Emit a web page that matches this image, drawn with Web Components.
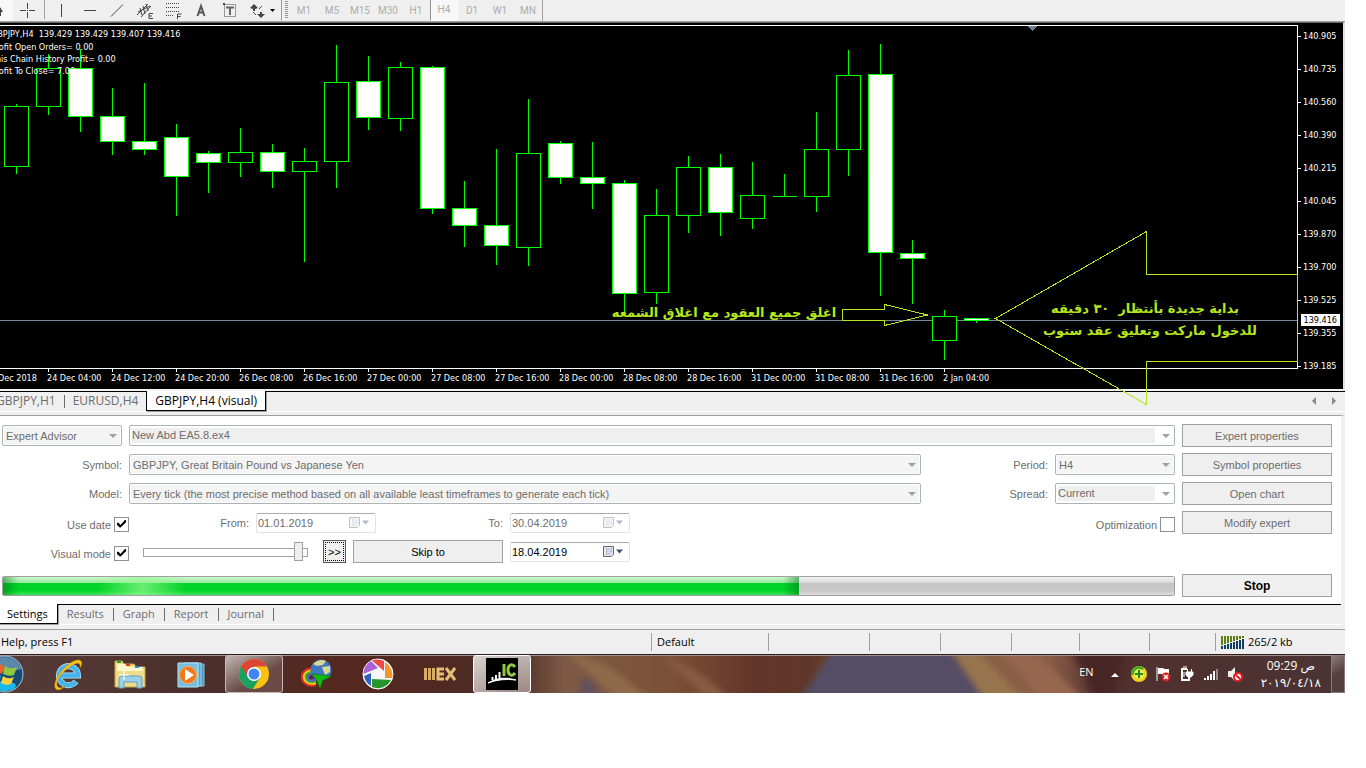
<!DOCTYPE html>
<html lang="en">
<head>
<meta charset="utf-8">
<title>GBPJPY,H4 (visual)</title>
<style>
  body {
    margin: 0;
    padding-right: 21px;
    background: #fff;
    font-family: "Open Sans", "Noto Sans", "DejaVu Sans", sans-serif;
    font-size: 11px;
    line-height: 16px;
    color: #000;
  }
</style>
</head>
<body>
<trade-terminal></trade-terminal>

<script>
// Small base class: subclasses only return their markup
class BaseElement extends HTMLElement {
  constructor() {
    super();
    this.attachShadow({ mode: 'open' });
  }

  connectedCallback() {
    this.shadowRoot.innerHTML = this.template();
  }
}

/* ---------- Toolbar ---------- */

class TradeToolbar extends BaseElement {
  template() {
    const tools = [
      ['Crosshair', '<path d="M14.500 2v6M14.500 11v6M7 9.500h6M16 9.500h6M14 9.500h1"/>'],
      null,
      ['Vertical line', '<path d="M14.500 3v13"/>'],
      ['Horizontal line', '<path d="M9 9.500h12"/>'],
      ['Trendline', '<path d="M8 15.500 20 3.500"/>'],
      ['Channel', '<path d="M6 14 17 3M10 16 20 5M9 7l2 7M12 5l2 8M15 3l2 7M7 11l12-6"/><path d="M22 12.500h-4v5h4M18 15h3"/>'],
      ['Fibonacci', '<path d="M7 2.500h14M7 6.500h14M7 10.500h14M7 14.500h8" stroke-dasharray="1 1"/><path d="M18.500 18v-5h4M18.500 15.500h3"/>'],
      ['Text', '<path d="M10.500 15 14 5l3.500 10M12 11.500h4" stroke="#555" stroke-width="2"/>'],
      ['Text label', '<path d="M9.500 3.500h11v12h-11z" stroke-dasharray="1 1"/><path d="M11 6.500h8M15 6v8" stroke="#666" stroke-width="2"/><path d="M8 2h2v2H8z" fill="#444" stroke="none"/>'],
      ['Arrows', '<path d="M7 7l4-4 4 4-3 1v2h-2V8zM14 13h3v-2h2v2h3l-4 4z" fill="#444" stroke="none"/><path d="M10 11l3 3M16 8l3-3"/><path d="M27 8h5l-2.500 3z" fill="#000" stroke="none"/>', 'wide']
    ];
    const periods = ['M1', 'M5', 'M15', 'M30', 'H1', 'H4', 'D1', 'W1', 'MN'];

    return `
      <style>
        :host {
          display: flex;
          align-items: stretch;
          height: 21px;
          background: #efefef;
          border-bottom: 1px solid #a0a0a0;
        }
        button {
          width: 28px;
          padding: 0;
          border: 0;
          background: none;
          font: 10px/18px Roboto, sans-serif;
          color: #adadad;
        }
        svg { display: block; fill: none; stroke: #444; }
        .cursor { width: 13px; background: #f8f8f8; }
        .wide { width: 38px; }
        .sep { width: 1px; background: #a0a0a0; margin: 0 2px 2px 3px; }
        .end { margin: 0; }
        .grip {
          width: 3px;
          margin: 1px 2px 2px 3px;
          background: repeating-linear-gradient(#999 0 1px, #efefef 1px 2px);
        }
        .active {
          box-sizing: border-box;
          border: 1px solid #fff;
          border-width: 0 1px 1px 0;
          border-left: 1px solid #909090;
          background: #f7f7f7;
        }
      </style>
      <button class="cursor" aria-label="Cursor">
        <svg width="13" height="20"><path d="M0 6l3 5H1v4H0z" fill="#444" stroke="none"/></svg>
      </button>
      ${tools.map(tool => tool ? `
        <button class="${tool[2] || ''}" aria-label="${tool[0]}">
          <svg width="${tool[2] ? 38 : 28}" height="20">${tool[1]}</svg>
        </button>` : '<span class="sep"></span>').join('')}
      <span class="sep end"></span>
      <span class="grip"></span>
      ${periods.map(p => `<button class="${p === 'H4' ? 'active' : ''}">${p}</button>`).join('')}
      <span class="sep end"></span>
    `;
  }
}
customElements.define('trade-toolbar', TradeToolbar);

/* ---------- Chart ---------- */

// high, body top, body bottom, low, bearish
const CANDLES = [
  [104, 106, 167, 174, 0], [54, 68, 107, 115, 0], [49, 68, 117, 132, 1],
  [88, 116, 142, 155, 1], [83, 141, 150, 155, 1], [124, 137, 177, 216, 1],
  [151, 153, 163, 193, 1], [128, 152, 163, 177, 0], [144, 152, 172, 188, 1],
  [148, 161, 172, 262, 0], [45, 82, 162, 188, 0], [56, 81, 118, 130, 1],
  [62, 67, 119, 131, 0], [66, 67, 209, 214, 1], [181, 208, 226, 247, 1],
  [149, 225, 246, 265, 1], [99, 153, 248, 266, 0], [141, 143, 178, 184, 1],
  [142, 177, 184, 209, 1], [180, 183, 294, 312, 1], [189, 215, 293, 304, 0],
  [156, 167, 216, 233, 0], [154, 167, 213, 236, 1], [162, 195, 219, 229, 0],
  [174, 196, 197, 197, 0], [112, 149, 197, 212, 0], [50, 75, 150, 176, 0],
  [44, 74, 253, 296, 1], [240, 253, 259, 304, 1], [310, 316, 341, 360, 0],
  [318, 318, 321, 323, 1]
];

class PriceChart extends BaseElement {
  candle([high, top, bottom, low, bearish], i) {
    const x = 4 + i * 32;
    return `
      <path d="M${x + 12.5} ${high}V${low}"/>
      <path d="M${x + 0.5} ${top + 0.5}h24V${bottom - 0.5}h-24z" fill="${bearish ? '#fff' : '#000'}"/>`;
  }

  template() {
    const prices = ['140.905', '140.735', '140.560', '140.390', '140.215', '140.045',
      '139.870', '139.700', '139.525', '139.355', '139.185'];
    const times = ['24 Dec 04:00', '24 Dec 12:00', '24 Dec 20:00', '26 Dec 08:00',
      '26 Dec 16:00', '27 Dec 00:00', '27 Dec 08:00', '27 Dec 16:00', '28 Dec 00:00',
      '28 Dec 08:00', '28 Dec 16:00', '31 Dec 00:00', '31 Dec 08:00', '31 Dec 16:00', '2 Jan 04:00'];

    return `
      <style>
        :host {
          display: grid;
          grid-template-columns: 1fr 45px;
          position: relative;
          padding-top: 2px;
          background: #000;
          border-top: 1px solid #696969;
          border-right: 2px solid #e3e3e3;
          border-bottom: 2px solid #f4f4f4;
          color: #fff;
          font: 9px/12px "DejaVu Sans Condensed", "DejaVu Sans", sans-serif;
        }
        .plot {
          height: 342px;
          border: 1px solid #fff;
          border-width: 1px 1px 1px 0;
        }
        .comment { position: relative; z-index: 2; overflow: hidden; }
        .comment p { margin: 0 0 0 -9px; white-space: pre; }
        .comment p:first-child { margin-top: 2px; margin-bottom: 1px; }
        .prices {
          display: flex;
          flex-direction: column;
          gap: 21px;
          height: 339px;
          padding-top: 5px;
        }
        .prices span { display: flex; align-items: center; gap: 2px; }
        .prices span::before { content: ""; width: 3px; height: 1px; background: #fff; }
        .times { display: flex; overflow: hidden; height: 20px; padding-top: 3px; box-sizing: border-box; }
        .times span { flex: none; width: 64px; white-space: nowrap; }
        .times .first { width: 49px; margin-left: -2px; }
        .current {
          position: absolute;
          right: 3px;
          top: 291px;
          padding: 0 3px;
          background: #fff;
          color: #000;
        }
        svg {
          position: absolute;
          left: 0;
          top: 0;
          width: 100%;
          height: 100%;
          overflow: visible;
          fill: none;
          stroke: #0f0;
          shape-rendering: crispEdges;
          pointer-events: none;
          z-index: 1;
        }
        .notes { stroke: #b5e61d; }
        .notes text {
          fill: #b5e61d;
          stroke: none;
          font: bold 13px "DejaVu Sans", sans-serif;
          text-anchor: middle;
          direction: rtl;
          white-space: pre;
        }
      </style>
      <div class="plot">
        <div class="comment">
          <p>GBPJPY,H4  139.429 139.429 139.407 139.416</p>
          <p>Profit Open Orders= 0.00</p>
          <p>This Chain History Profit= 0.00</p>
          <p>Profit To Close= 7.00</p>
        </div>
      </div>
      <div class="prices">${prices.map(p => `<span>${p}</span>`).join('')}</div>
      <div class="times"><span class="first">Dec 2018</span>${times.map(t => `<span>${t}</span>`).join('')}</div>
      <svg>
        <g transform="translate(0 -23)">
          <path d="M0 320.500H1297" stroke="#778899"/>
          <path d="M1027 26h11l-5.500 5z" fill="#708090" stroke="none"/>
          <path stroke="#fff" d="${times.map((t, i) => `M${48.5 + i * 64} 369v3`).join('')}"/>
          ${CANDLES.map((c, i) => this.candle(c, i)).join('')}
          <g class="notes">
            <path d="M842.500 309.500h42v-5l43 10.500-43 10.500v-5h-42z"/>
            <path d="M995.500 318.500 1146.500 231.500v43h151v87h-151v43z"/>
            <text x="724" y="317">اغلق جميع العقود مع اغلاق الشمعه</text>
            <text x="1145" y="313">بداية جديدة بأنتظار  ٣٠ دقيقه</text>
            <text x="1150" y="335">للدخول ماركت وتعليق عقد ستوب</text>
          </g>
        </g>
      </svg>
      <span class="current">139.416</span>
    `;
  }
}
customElements.define('price-chart', PriceChart);

/* ---------- Tabs ---------- */

class TabStrip extends BaseElement {
  template() {
    return `
      <style>
        :host {
          display: flex;
          height: 19px;
          border-top: 1px solid #000;
          border-bottom: 1px solid #fff;
          background: #efefef;
        }
        .end { display: flex; align-items: center; gap: 12px; margin-left: auto; padding: 0 8px 2px 0; }
      </style>
      <slot></slot>
      <div class="end"><slot name="end"></slot></div>
    `;
  }
}
customElements.define('tab-strip', TabStrip);

class TabItem extends BaseElement {
  template() {
    return `
      <style>
        :host { display: flex; align-items: flex-start; }
        button {
          height: 18px;
          padding: 0 var(--tab-space, 10px);
          border: 0;
          background: none;
          font: inherit;
          line-height: 18px;
          color: #6d6d6d;
          white-space: nowrap;
        }
        :host([divider])::after {
          content: "";
          width: 1px;
          height: 13px;
          margin-top: 3px;
          background: #6d6d6d;
        }
        :host([selected]) { margin-top: -1px; }
        :host([selected]) button {
          height: 20px;
          background: #fff;
          color: #000;
          border: 1px solid #000;
          border-top: 0;
          box-shadow: 1px 1px #a0a0a0;
        }
        :host([edge]) { margin-left: -4px; }
        :host([edge]:not([selected])) button { padding-left: 0; }
      </style>
      <button role="tab" aria-selected="${this.hasAttribute('selected')}"><slot></slot></button>
    `;
  }
}
customElements.define('tab-item', TabItem);

/* ---------- Form controls ---------- */

const CONTROL_CSS = `
  label { text-align: right; white-space: nowrap; }
  select, input, button, label { font: 11px/14px "Liberation Sans", Arial, sans-serif; color: #6d6d6d; }
  select, input { box-sizing: border-box; margin: 0; opacity: 1; }
`;

class SelectField extends BaseElement {
  template() {
    const label = this.getAttribute('label');
    const editable = this.hasAttribute('editable');
    const name = this.getAttribute('name');
    return `
      <style>
        ${CONTROL_CSS}
        :host { display: flex; align-items: center; gap: 7px; min-width: 0; }
        label { flex: none; width: 120px; }
        .box { display: grid; flex: 1; min-width: 0; align-items: center; }
        .box > * { grid-area: 1 / 1; }
        select {
          appearance: none;
          width: 100%;
          height: 21px;
          padding: 0 20px 0 3px;
          border: 1px solid #adb2b5;
          border-radius: 2px;
          background: #f4f4f4;
          box-shadow: inset 0 0 0 1px #fff;
        }
        .editable {
          padding-bottom: 2px;
          padding-left: 2px;
          background: linear-gradient(#efefef, #efefef) 2px 2px / calc(100% - 21px) 15px no-repeat #fff;
        }
        svg { justify-self: end; margin-right: 5px; pointer-events: none; }
      </style>
      ${label ? `<label for="field">${label}</label>` : ''}
      <div class="box">
        <select id="field" class="${editable ? 'editable' : ''}" ${name ? `aria-label="${name}"` : ''} disabled>
          <option>${this.getAttribute('value')}</option>
        </select>
        <svg width="8" height="4"><path d="M0 0h8L4 4z" fill="#a0a0a0"/></svg>
      </div>
    `;
  }
}
customElements.define('select-field', SelectField);

class DateField extends BaseElement {
  template() {
    const label = this.getAttribute('label');
    const disabled = this.hasAttribute('disabled') ? 'disabled' : '';
    return `
      <style>
        ${CONTROL_CSS}
        :host { display: flex; align-items: center; gap: 7px; }
        label { width: 120px; }
        .box {
          display: flex;
          align-items: center;
          box-sizing: border-box;
          width: 120px;
          height: 20px;
          border: 1px solid #e2e3ea;
          border-top-color: #abadb3;
          border-radius: 2px;
          background: #fff;
        }
        input { flex: 1; min-width: 0; padding: 0 0 0 1px; border: 0; background: none; }
        button { padding: 0; margin-right: 5px; border: 0; background: none; }
        svg { display: block; }
        :host([disabled]) svg { opacity: .4; }
        :host(:not([disabled])) input { color: #000; }
      </style>
      ${label ? `<label for="date">${label}</label>` : ''}
      <div class="box">
        <input id="date" type="text" value="${this.getAttribute('value')}" ${label ? '' : 'aria-label="Skip to date"'} ${disabled}>
        <button aria-label="Open calendar" ${disabled}>
          <svg width="21" height="13">
            <path d="M.500 1.500h10v8l-2 2h-8z" fill="#e6e9ef" stroke="#666"/>
            <path d="M3 4h6M3 6.500h6M3 9h5" stroke="#aab4c8" stroke-width="2"/>
            <path d="M5 3v7M7 3v7" stroke="#e6e9ef"/>
            <path d="M13 4.500h7l-3.500 4z" fill="#3b5079"/>
          </svg>
        </button>
      </div>
    `;
  }
}
customElements.define('date-field', DateField);

class CheckField extends BaseElement {
  template() {
    return `
      <style>
        ${CONTROL_CSS}
        :host { display: block; padding-top: 3px; }
        label { display: flex; align-items: center; justify-content: flex-end; gap: 3px; line-height: 15px; }
        input {
          appearance: none;
          display: grid;
          place-items: center;
          width: 15px;
          height: 15px;
          border: 1px solid #8f8f8f;
          background: #fff;
        }
        span { padding-top: 2px; }
        input:checked::before {
          content: "";
          width: 9px;
          height: 9px;
          background: #000;
          clip-path: polygon(0 35%, 18% 35%, 38% 60%, 88% 5%, 100% 5%, 100% 30%, 40% 90%, 30% 90%, 0 60%);
        }
      </style>
      <label><span>${this.getAttribute('label')}</span><input type="checkbox" ${this.hasAttribute('checked') ? 'checked' : ''}></label>
    `;
  }
}
customElements.define('check-field', CheckField);

class PushButton extends BaseElement {
  template() {
    return `
      <style>
        ${CONTROL_CSS}
        :host { display: grid; height: 23px; }
        button {
          box-sizing: border-box;
          padding: 0;
          border: 1px solid #a0a0a0;
          background: #efefef;
        }
        :host([ready]) button { color: #000; }
        :host([strong]) button { font-weight: bold; font-size: 12px; }
        :host([focused]) button { border-color: #555; outline: 1px dotted #000; outline-offset: -3px; }
      </style>
      <button ${this.hasAttribute('ready') ? '' : 'disabled'}><slot></slot></button>
    `;
  }
}
customElements.define('push-button', PushButton);

/* ---------- Strategy tester ---------- */

class StrategyTester extends BaseElement {
  template() {
    return `
      <style>
        :host {
          display: grid;
          grid-template-columns: 1fr 150px;
          column-gap: 7px;
          row-gap: 6px;
          margin-top: 3px;
          padding: 8px 9px 7px 2px;
          background: #fff;
          border-top: 1px solid #a0a0a0;
          border-right: 4px solid #efefef;
        }
        .row { display: flex; align-items: center; gap: 7px; height: 23px; }
        .kind { width: 120px; }
        .wide { flex: 1; }
        .side { width: 247px; }
        .check { width: 127px; margin-right: -7px; }
        .auto { margin-left: auto; }
        .speed {
          appearance: none;
          width: 165px;
          height: 20px;
          margin: 0 8px 0 14px;
          background: linear-gradient(#fff, #fff) 1px 7px / 163px 7px no-repeat,
                      linear-gradient(#a0a0a0, #a0a0a0) 0 6px / 165px 9px no-repeat;
        }
        .speed::-webkit-slider-thumb {
          appearance: none;
          box-sizing: border-box;
          width: 9px;
          height: 19px;
          border: 1px solid #a0a0a0;
          background: #efefef;
        }
        .skip { width: 150px; }
        .step { width: 23px; }
        .last { margin-top: 5px; }
        progress {
          appearance: none;
          width: 100%;
          height: 20px;
          box-sizing: border-box;
          border: 1px solid #a0a0a0;
          border-radius: 2px;
        }
        progress::-webkit-progress-bar {
          background: linear-gradient(#f2f2f2, #dcdcdc 30%, #c6c6c6 35%, #cacaca 80%, #dedede);
        }
        progress::-webkit-progress-value {
          background:
            linear-gradient(90deg, transparent 95px, rgba(150, 250, 145, .7) 139px, transparent 183px),
            linear-gradient(90deg, rgba(0, 110, 20, .5), transparent 16px, transparent calc(100% - 16px), rgba(0, 110, 20, .5)),
            linear-gradient(#ccf9cd, #94e89c 33%, #00d328 35%, #00d328 75%, #3ce556);
        }
      </style>
      <div class="row">
        <select-field class="kind" name="Type" value="Expert Advisor"></select-field>
        <select-field class="wide" name="Expert" value="New Abd EA5.8.ex4" editable></select-field>
      </div>
      <push-button>Expert properties</push-button>

      <div class="row">
        <select-field class="wide" label="Symbol:" value="GBPJPY, Great Britain Pound vs Japanese Yen"></select-field>
        <select-field class="side" label="Period:" value="H4"></select-field>
      </div>
      <push-button>Symbol properties</push-button>

      <div class="row">
        <select-field class="wide" label="Model:" value="Every tick (the most precise method based on all available least timeframes to generate each tick)"></select-field>
        <select-field class="side" label="Spread:" value="Current" editable></select-field>
      </div>
      <push-button>Open chart</push-button>

      <div class="row">
        <check-field class="check" label="Use date" checked></check-field>
        <date-field label="From:" value="01.01.2019" disabled></date-field>
        <date-field label="To:" value="30.04.2019" disabled></date-field>
        <check-field class="auto" label="Optimization"></check-field>
      </div>
      <push-button>Modify expert</push-button>

      <div class="row">
        <check-field class="check" label="Visual mode" checked></check-field>
        <input class="speed" type="range" min="0" max="32" value="31" aria-label="Visual speed">
        <push-button class="step" ready focused>&gt;&gt;</push-button>
        <push-button class="skip" ready>Skip to</push-button>
        <date-field value="18.04.2019"></date-field>
      </div>
      <span></span>

      <div class="row last">
        <progress max="100" value="68" aria-label="Test progress"></progress>
      </div>
      <push-button class="last" ready strong>Stop</push-button>
    `;
  }
}
customElements.define('strategy-tester', StrategyTester);

/* ---------- Status bar ---------- */

class StatusBar extends BaseElement {
  template() {
    const bars = Array.from({ length: 8 }, (_, i) => `
      <path d="M${i * 3 + 1} 0v${9 - i}" stroke="#5d7d10" stroke-width="2"/>
      <path d="M${i * 3 + 1} ${10 - i}V13" stroke="#0f3f63" stroke-width="2"/>`).join('');
    return `
      <style>
        :host {
          display: flex;
          align-items: center;
          height: 24px;
          border-top: 1px solid #a0a0a0;
          background: #efefef;
        }
        .hint { flex: 1; padding-left: 1px; }
        .cell {
          box-sizing: border-box;
          display: flex;
          align-items: center;
          gap: 4px;
          height: 18px;
          padding-left: 5px;
          border-left: 1px solid #a0a0a0;
        }
      </style>
      <span class="hint">Help, press F1</span>
      <span class="cell" style="width: 117px">Default</span>
      ${[101, 71, 71, 68, 70, 66].map(w => `<span class="cell" style="width: ${w}px"></span>`).join('')}
      <span class="cell" style="width: 130px">
        <svg width="23" height="13">${bars}</svg>
        <span>265/2 kb</span>
      </span>
    `;
  }
}
customElements.define('status-bar', StatusBar);

/* ---------- Taskbar ---------- */

const APPS = [
  ['Internet Explorer', `
    <path d="M9 17.500h17a9.500 9.500 0 1 0-2 6" fill="none" stroke="#b9ecff" stroke-width="6"/>
    <path d="M9 17.500h17a9.500 9.500 0 1 0-2 6" fill="none" stroke="#45b4ec" stroke-width="4.500"/>
    <path d="M4 31C-1 26 10 9 20 4c9-5 12 0 8 6 1-6-3-6-9-2C9 14 2 25 6 29c2 2 5 0 7-1-4 4-7 5-9 3z" fill="#fcc21b" stroke="#c88a00" stroke-width=".5"/>`],
  ['Explorer', `
    <path d="M1 3h7l2 3h10l2 3h9v20H1z" fill="#f0dc88" stroke="#c6a545"/>
    <path d="M3 6h8l3 3h15v4H3z" fill="#fff7c8"/>
    <path d="M3 4h4" stroke="#22a830" stroke-width="2"/><path d="M12 7h4" stroke="#d84020" stroke-width="2"/><path d="M21 9h4" stroke="#2090e0" stroke-width="2"/>
    <path d="M5 30v-9q0-3 3-3h17q3 0 3 3v9h-5v-6H10v6z" fill="#9bd0e8" stroke="#5c9fc4"/>
    <path d="M10 12v10M5 17h10" stroke="#fff"/>`],
  ['Media Player', `
    <path d="M11 6h17v22H11z" fill="#4f97bd" stroke="#8ac4e0"/><path d="M8 5h17v23H8z" fill="#5aa5cc" stroke="#a0d4ec"/>
    <path d="M2 5h20v24H2z" fill="#78bfdf" stroke="#b8e4f5"/>
    <circle cx="12" cy="17" r="8.500" fill="#f07818" stroke="#ffb060"/><path d="M9 11v12l9-6z" fill="#fff"/>`],
  ['Chrome', `
    <circle cx="16" cy="16" r="15" fill="#fbc116"/>
    <path d="M3 8.500A15 15 0 0 0 15 31l7-11.500-6-3.500z" fill="#1aa260"/>
    <path d="M3 8.500A15 15 0 0 1 29 8.500H16l-6 10z" fill="#dc4437"/>
    <circle cx="16" cy="16" r="7" fill="#fff"/><circle cx="16" cy="16" r="5.500" fill="#4285f4"/>`, 'open'],
  ['Download Manager', `
    <path d="M15 11C7 9 1 14 2 20s8 9 14 7" fill="none" stroke="#e83020" stroke-width="2"/>
    <path d="M15 13C9 11 3 15 4 20s7 7 12 5" fill="none" stroke="#fbd420" stroke-width="2"/>
    <path d="M15 15C10 13 5 16 6 20s5 5 10 3" fill="none" stroke="#38b838" stroke-width="2"/>
    <path d="M15 17C11 15 8 17 8 20s4 3 8 1" fill="none" stroke="#6a58d8" stroke-width="2"/>
    <circle cx="21" cy="12" r="10.500" fill="#3f78c0"/><path d="M13 6q7-6 13-3l-3 4-6 1zM22 9l8-1v6l-5 3z" fill="#d8d890"/>
    <path d="M12 16l20 2-9 4-3 9-3-8z" fill="#12b812" stroke="#086808" stroke-width=".5"/>`],
  ['Picasa', `
    <circle cx="16" cy="16" r="15" fill="#f6f6f6" stroke="#fff"/>
    <path d="M10 2.500A15 15 0 0 1 22 3v10z" fill="#ef4848"/><path d="M23 4a15 15 0 0 1 7 16h-7z" fill="#f5952c"/>
    <path d="M29 22a15 15 0 0 1-19 7v-8z" fill="#25962e"/><path d="M9 28A15 15 0 0 1 2 18l7-3z" fill="#2e62bd"/>
    <path d="M1.500 16A15 15 0 0 1 9 3l7 7z" fill="#aa62d8"/>`],
  ['EX', `
    <path d="M1.500 10v12M5.500 10v12M9.500 10v12" stroke="#d8ad63" stroke-width="3"/>
    <path d="M20 11h-6v10h6M14 16h6M22 10l9 12M31 10l-9 12" fill="none" stroke="#e4bd75" stroke-width="3"/>`],
  ['IC', `
    <path d="M0 0h32v32H0z" fill="#000"/>
    <path d="M6.500 19v3M10 17v4M13.500 14v6" stroke="#fff" stroke-width="2"/>
    <path d="M2 25q13-8 28-3-15-2-28 3z" fill="#fff" stroke="#fff"/>
    <path d="M18 6v12M29 9c-3-4-7-2-7 3s4 7 7 3" fill="none" stroke="#92c83e" stroke-width="3"/>`, 'front']
];

const TRAY = [
  ['Show hidden icons', '<path d="M4 11h8L8 7z" fill="#fff"/>'],
  ['Updates', '<circle cx="8" cy="8" r="8" fill="#f5cf20"/><path d="M0 9A8 8 0 0 1 13 2L8 8z" fill="#48a828"/><circle cx="8" cy="8" r="5" fill="#ebf05a"/><path d="M8 4v8M4 8h8" stroke="#218a1c" stroke-width="2"/>'],
  ['Action center', '<path d="M2 1v14" stroke="#fff"/><path d="M3 2h5l1 1h5v6H8L7 8H3z" fill="#fff"/><circle cx="11" cy="11" r="4.500" fill="#d82020"/><path d="M9 9l4 4M13 9l-4 4" stroke="#fff" stroke-width="1.500"/>'],
  ['Power', '<path d="M8 3H3v11h7v-3" fill="none" stroke="#fff" stroke-width="2"/><path d="M4 1h4M5 6v5" stroke="#fff"/><path d="M7 6h7v3l-2 2H9L7 9zM8.500 3v3M12.500 3v3M10.500 11v4" fill="#fff" stroke="#fff"/>'],
  ['Network', '<path d="M2 12v2M5 10v4M8 8v6M11 5v9" stroke="#fff" stroke-width="2"/><path d="M14 3v11" stroke="#9a8a8a" stroke-width="2"/>'],
  ['Volume', '<path d="M1 5h3l4-4v14l-4-4H1z" fill="#eee"/><circle cx="11" cy="11" r="4" fill="#fff" stroke="#e02020" stroke-width="2"/><path d="M8 8l6 6" stroke="#e02020" stroke-width="2"/>']
];

class TaskBar extends BaseElement {
  template() {
    return `
      <style>
        :host {
          display: flex;
          align-items: center;
          position: relative;
          height: 39px;
          border-top: 1px solid #2c1c1c;
          box-sizing: border-box;
          color: #fff;
        }
        .wallpaper { position: absolute; inset: 0; z-index: -1; width: 100%; height: 100%; }
        button {
          display: grid;
          place-items: center;
          box-sizing: border-box;
          padding: 0;
          border: 1px solid transparent;
          background: none;
        }
        .start { width: 39px; border: 0; justify-items: start; }
        .app { width: 58px; height: 38px; margin-right: 4px; border-radius: 3px; }
        .open { border-color: #c9bab8; background: linear-gradient(150deg, rgba(255, 255, 255, .65), rgba(255, 255, 255, .15) 60%); }
        .front { border: 1px solid #fff; background: linear-gradient(150deg, rgba(255, 255, 255, .8), rgba(255, 255, 255, .4)); }
        .lang { margin-left: auto; margin-right: 13px; padding-bottom: 4px; }
        .tray { display: flex; gap: 8px; }
        .tray button { width: 16px; height: 16px; border: 0; }
        .clock { margin: 0 10px 0 18px; text-align: center; font-size: 12px; line-height: 17px; }
        .desktop {
          width: 14px;
          height: 38px;
          border: 1px solid #8a7a7a;
          background: linear-gradient(150deg, rgba(255, 255, 255, .35), rgba(255, 255, 255, .05) 50%);
        }
      </style>
      <svg class="wallpaper" viewBox="0 0 1345 38" preserveAspectRatio="none">
        <defs>
          <linearGradient id="base">
            <stop offset="0" stop-color="#563c39"/>
            <stop offset=".15" stop-color="#4b2e2a"/>
            <stop offset=".25" stop-color="#54281f"/>
            <stop offset=".38" stop-color="#4b2a24"/>
            <stop offset=".42" stop-color="#7d5a46"/>
            <stop offset=".5" stop-color="#7b5037"/>
            <stop offset=".56" stop-color="#63352a"/>
            <stop offset=".6" stop-color="#5f3728"/>
            <stop offset=".7" stop-color="#8a6444"/>
            <stop offset=".78" stop-color="#8a5c47"/>
            <stop offset=".82" stop-color="#50302d"/>
            <stop offset="1" stop-color="#4b3435"/>
          </linearGradient>
          <filter id="soft"><feGaussianBlur stdDeviation="3"/></filter>
        </defs>
        <path d="M0 0h1345v38H0z" fill="url(#base)"/>
        <g filter="url(#soft)">
          <path d="M835-9h112l40 57H798z" fill="#544e65"/>
          <path d="M950-9h22l55 57h-40z" fill="#96754e"/>
          <path d="M998-9h30l60 57h-45z" fill="#97664f"/>
          <path d="M1070-9h60l-20 57h-14z" fill="#482726"/>
          <path d="M560-9l50 21 45 36h-34z" fill="#8f6a4a"/>
          <path d="M655-6l50 28 30 26h-24z" fill="#875b42"/>
          <path d="M585 20l16 20h-22z" fill="#5e5060"/>
        </g>
        <path d="M0 .500h1345" stroke="#a39290"/>
      </svg>
      <button class="start" aria-label="Start">
        <svg width="30" height="38" viewBox="0 0 30 38">
          <circle cx="5" cy="19" r="18" fill="#174b75" stroke="#a5c6d8"/>
          <ellipse cx="5" cy="31" rx="11" ry="5" fill="#19b8e8"/>
          <path d="M-12 14A18 18 0 0 1 22 14Q5 19-12 14z" fill="#7ba1bd" opacity=".7"/>
          <path d="M-6 11q5-3 10 0l-2 8q-4-2-9 0z" fill="#f0642c"/><path d="M5 11q5 4 12 1l-3 8q-5 2-11-1z" fill="#90c840"/>
          <path d="M-8 21q5-3 9 0l-2 8q-3-2-8 0z" fill="#3c98e0"/><path d="M3 21q5 4 11 1l-3 7q-5 2-10-1z" fill="#fcd23c"/>
        </svg>
      </button>
      ${APPS.map(([name, art, state]) => `
        <button class="app ${state || ''}" aria-label="${name}">
          <svg width="32" height="32" viewBox="0 0 32 32">${art}</svg>
        </button>`).join('')}
      <span class="lang">EN</span>
      <div class="tray">
        ${TRAY.map(([name, art]) => `<button aria-label="${name}"><svg width="16" height="16">${art}</svg></button>`).join('')}
      </div>
      <div class="clock">
        <div>09:29 ص</div>
        <div>٢٠١٩/٠٤/١٨</div>
      </div>
      <button class="desktop" aria-label="Show desktop"></button>
    `;
  }
}
customElements.define('task-bar', TaskBar);

/* ---------- Page ---------- */

class TradeTerminal extends BaseElement {
  template() {
    return `
      <style>
        :host { display: flex; flex-direction: column; isolation: isolate; background: #efefef; }
        .charts { font-size: 12px; --tab-space: 8px; }
        .results { margin-right: 4px; --tab-space: 9px; }
        .results tab-item:first-child { margin-left: -3px; }
        .nav { padding: 0; border: 0; background: none; }
        .nav svg { display: block; }
        status-bar { margin-top: 4px; }
      </style>
      <trade-toolbar></trade-toolbar>
      <price-chart></price-chart>
      <tab-strip class="charts">
        <tab-item edge divider>GBPJPY,H1</tab-item>
        <tab-item>EURUSD,H4</tab-item>
        <tab-item selected>GBPJPY,H4 (visual)</tab-item>
        <button slot="end" class="nav" aria-label="Scroll tabs left"><svg width="7" height="8"><path d="M5 0v8L1 4z" fill="#888"/></svg></button>
        <button slot="end" class="nav" aria-label="Scroll tabs right"><svg width="7" height="8"><path d="M2 0v8l4-4z" fill="#888"/></svg></button>
      </tab-strip>
      <strategy-tester></strategy-tester>
      <tab-strip class="results">
        <tab-item edge selected>Settings</tab-item>
        <tab-item divider>Results</tab-item>
        <tab-item divider>Graph</tab-item>
        <tab-item divider>Report</tab-item>
        <tab-item divider>Journal</tab-item>
      </tab-strip>
      <status-bar></status-bar>
      <task-bar></task-bar>
    `;
  }
}
customElements.define('trade-terminal', TradeTerminal);
</script>
</body>
</html>
